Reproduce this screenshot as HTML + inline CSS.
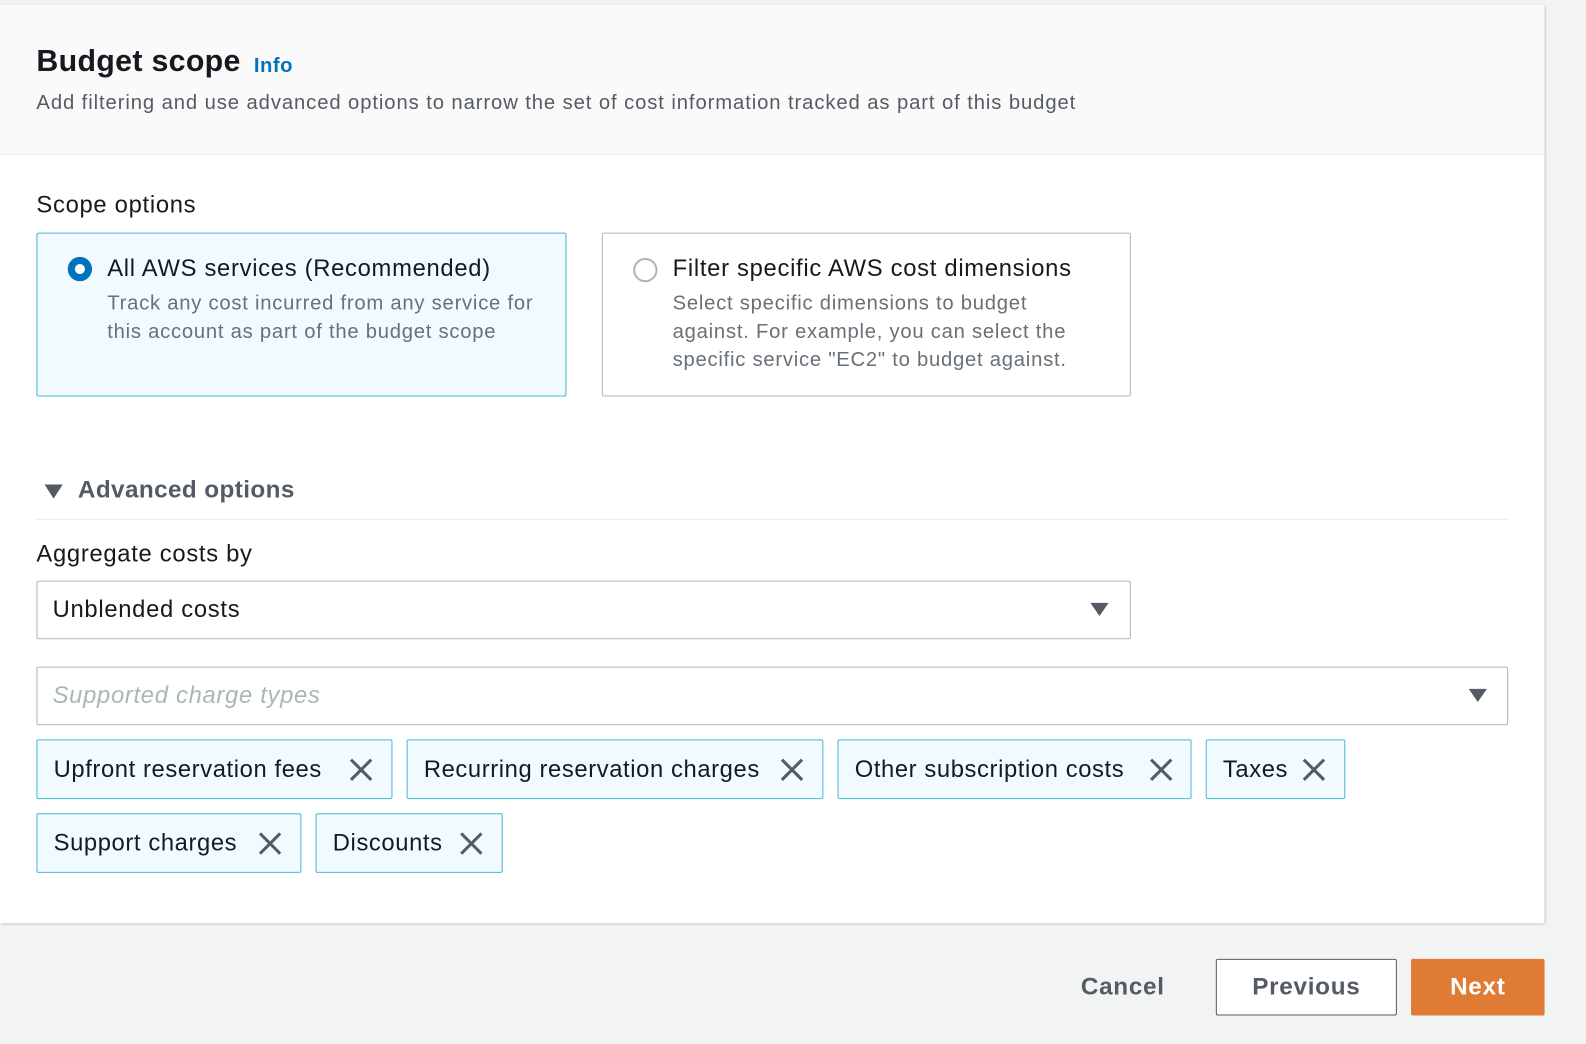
<!DOCTYPE html>
<html><head><style>
*{box-sizing:border-box;margin:0;padding:0}
html,body{width:1586px;height:1044px;background:#f2f3f3;overflow:hidden}
body{font-family:"Liberation Sans",sans-serif;color:#16191f}
#w{position:absolute;left:0;top:0;width:1568px;height:1032px;transform:scale(1.0115);transform-origin:0 0}
.a{position:absolute;white-space:nowrap}
#panel{position:absolute;left:0;top:5px;width:1527px;height:908px;background:#fff;box-shadow:1px 1px 2px rgba(0,0,0,.3)}
#hdr{position:absolute;left:0;top:0;width:1527px;height:148px;background:#fafafa;border-bottom:1px solid #eaeded}
.card{position:absolute;top:230px;width:524px;height:162px;border:1px solid #aab7b8;border-radius:2px;background:#fff}
.card.sel{border-color:#44b9d6;background:#f1faff}
.radio{position:absolute;left:30px;top:24px;width:24px;height:24px;border-radius:50%}
.t{font-size:23.5px;color:#16191f;letter-spacing:0.7px}
.d{font-size:20px;color:#687078;line-height:28px;letter-spacing:0.75px}
.box{position:absolute;border:1px solid #aab7b8;border-radius:2px;background:#fff}
.tri{position:absolute;width:0;height:0;border-left:9px solid transparent;border-right:9px solid transparent;border-top:13px solid #545b64}
.tok{position:absolute;height:59px;border:1px solid #44b9d6;border-radius:2px;background:#f1faff;font-size:23.5px;letter-spacing:0.6px;line-height:57px;padding-left:16px;white-space:nowrap}
.tok svg{position:absolute;top:17px}
.btn{position:absolute;top:948px;height:56px;font-size:24px;letter-spacing:0.7px;font-weight:bold;text-align:center;line-height:56px;border-radius:2px}
</style></head><body><div id="w">
<div id="panel">
<div id="hdr"></div>
</div>
<div class="a" style="left:36px;top:44px;font-size:30px;font-weight:bold;letter-spacing:0.3px">Budget scope</div>
<div class="a" style="left:251px;top:54px;font-size:20px;font-weight:bold;color:#0073bb;letter-spacing:0.5px">Info</div>
<div class="a" style="left:36px;top:91px;font-size:20px;color:#545b64;letter-spacing:0.9px">Add filtering and use advanced options to narrow the set of cost information tracked as part of this budget</div>
<div class="a" style="left:36px;top:189px;font-size:23.5px;letter-spacing:0.7px">Scope options</div>
<div class="card sel" style="left:36px">
 <div class="radio" style="border:7px solid #0073bb;background:#fff;top:23px"></div>
 <div class="a t" style="left:69px;top:21px">All AWS services (Recommended)</div>
 <div class="a d" style="left:69px;top:55px">Track any cost incurred from any service for<br>this account as part of the budget scope</div>
</div>
<div class="card" style="left:595px;width:523px">
 <div class="radio" style="border:2px solid #aab7b8;left:30px"></div>
 <div class="a t" style="left:69px;top:21px">Filter specific AWS cost dimensions</div>
 <div class="a d" style="left:69px;top:55px">Select specific dimensions to budget<br>against. For example, you can select the<br>specific service "EC2" to budget against.</div>
</div>
<div class="tri" style="left:44px;top:479px;border-top-width:14px"></div>
<div class="a" style="left:77px;top:471px;font-size:24px;font-weight:bold;color:#545b64;letter-spacing:0.4px">Advanced options</div>
<div class="a" style="left:36px;top:513px;width:1455px;height:1px;background:#eaeded"></div>
<div class="a" style="left:36px;top:534px;font-size:23.5px;letter-spacing:0.7px">Aggregate costs by</div>
<div class="box" style="left:36px;top:574px;width:1082px;height:58px"></div>
<div class="a" style="left:52px;top:589px;font-size:23.5px;letter-spacing:0.7px">Unblended costs</div>
<div class="tri" style="left:1078px;top:596px"></div>
<div class="box" style="left:36px;top:659px;width:1455px;height:58px"></div>
<div class="a" style="left:52px;top:674px;font-size:23.5px;font-style:italic;color:#aab7b8;letter-spacing:0.7px">Supported charge types</div>
<div class="tri" style="left:1452px;top:681px"></div>

<div class="tok" style="left:36px;top:731px;width:352px">Upfront reservation fees<svg style="left:308px" width="24" height="24" viewBox="0 0 24 24"><path d="M2 2L22 22M22 2L2 22" stroke="#545b64" stroke-width="3"/></svg></div>
<div class="tok" style="left:402px;top:731px;width:412px">Recurring reservation charges<svg style="left:368px" width="24" height="24" viewBox="0 0 24 24"><path d="M2 2L22 22M22 2L2 22" stroke="#545b64" stroke-width="3"/></svg></div>
<div class="tok" style="left:828px;top:731px;width:350px">Other subscription costs<svg style="left:307px" width="24" height="24" viewBox="0 0 24 24"><path d="M2 2L22 22M22 2L2 22" stroke="#545b64" stroke-width="3"/></svg></div>
<div class="tok" style="left:1192px;top:731px;width:138px">Taxes<svg style="left:94px" width="24" height="24" viewBox="0 0 24 24"><path d="M2 2L22 22M22 2L2 22" stroke="#545b64" stroke-width="3"/></svg></div>
<div class="tok" style="left:36px;top:804px;width:262px">Support charges<svg style="left:218px" width="24" height="24" viewBox="0 0 24 24"><path d="M2 2L22 22M22 2L2 22" stroke="#545b64" stroke-width="3"/></svg></div>
<div class="tok" style="left:312px;top:804px;width:185px">Discounts<svg style="left:141px" width="24" height="24" viewBox="0 0 24 24"><path d="M2 2L22 22M22 2L2 22" stroke="#545b64" stroke-width="3"/></svg></div>

<div class="btn" style="left:1050px;width:120px;color:#545b64">Cancel</div>
<div class="btn" style="left:1202px;width:179px;border:1px solid #545b64;background:#fff;color:#545b64;line-height:54px">Previous</div>
<div class="btn" style="left:1395px;width:132px;color:#fff;background:#e07b35">Next</div>
</div></body></html>
